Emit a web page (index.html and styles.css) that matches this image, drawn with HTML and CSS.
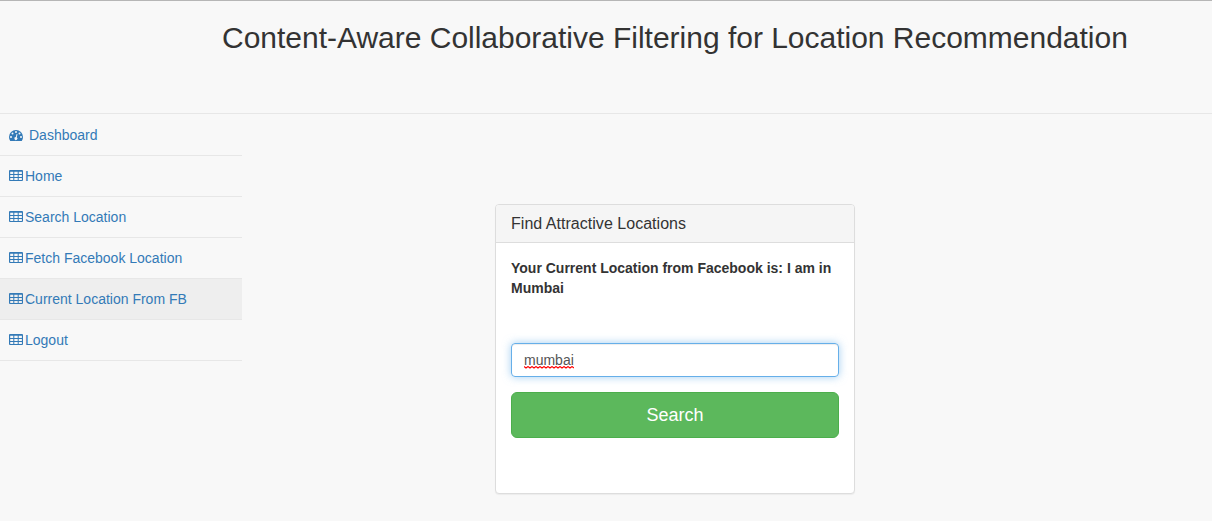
FILE: index.html
```html
<!DOCTYPE html>
<html lang="en">
<head>
<meta charset="utf-8">
<title>Content-Aware Collaborative Filtering for Location Recommendation</title>
<link rel="stylesheet" href="styles.css">
</head>
<body>
<svg class="defs" width="0" height="0">
  <symbol id="table" viewBox="0 0 14 14"><path fill-rule="evenodd" d="M1 1H13Q14 1 14 2V11Q14 12 13 12H1Q0 12 0 11V2Q0 1 1 1ZM1.200 2.800V5H4.300V2.800ZM5.300 2.800V5H8.700V2.800ZM9.700 2.800V5H12.900V2.800ZM1.200 6V8H4.300V6ZM5.300 6V8H8.700V6ZM9.700 6V8H12.900V6ZM1.200 9V11H4.300V9ZM5.300 9V11H8.700V9ZM9.700 9V11H12.900V9Z"/></symbol>
</svg>
<header class="navbar"><h1 class="title">Content-Aware Collaborative Filtering for Location Recommendation</h1></header>
<div class="wrapper">
  <nav class="sidebar">
    <a class="item" href="#"><svg class="icon dash" viewBox="0 0 14 14"><path fill-rule="evenodd" d="M7 2A7 7 0 0 1 14 9Q14 11 12.900 12.800Q12.800 13 12.500 13H1.500Q1.200 13 1.100 12.800Q0 11 0 9A7 7 0 0 1 7 2ZM2 8a1 1 0 1 0 0 2a1 1 0 1 0 0-2ZM3.500 4.500a1 1 0 1 0 0 2a1 1 0 1 0 0-2ZM7 3a1 1 0 1 0 0 2a1 1 0 1 0 0-2ZM10.500 4.500a1 1 0 1 0 0 2a1 1 0 1 0 0-2ZM12 8a1 1 0 1 0 0 2a1 1 0 1 0 0-2ZM7.600 6L6.800 9a1.500 1.500 0 1 0 1 .3L8.500 6.200Z"/></svg>Dashboard</a>
    <a class="item" href="#"><svg class="icon"><use href="#table"/></svg>Home</a>
    <a class="item" href="#"><svg class="icon"><use href="#table"/></svg>Search Location</a>
    <a class="item" href="#"><svg class="icon"><use href="#table"/></svg>Fetch Facebook Location</a>
    <a class="item active" href="#"><svg class="icon"><use href="#table"/></svg>Current Location From FB</a>
    <a class="item" href="#"><svg class="icon"><use href="#table"/></svg>Logout</a>
  </nav>
  <main class="content">
    <section class="panel">
      <h2 class="panel-heading">Find Attractive Locations</h2>
      <div class="panel-body">
        <p class="current">Your Current Location from Facebook is: I am in Mumbai</p>
        <div class="input" role="textbox"><span class="misspelled">mumbai<svg class="squiggle" width="50" height="3" viewBox="0 0 50 3"><path d="M0 .5L2 2L4 .5L6 2L8 .5L10 2L12 .5L14 2L16 .5L18 2L20 .5L22 2L24 .5L26 2L28 .5L30 2L32 .5L34 2L36 .5L38 2L40 .5L42 2L44 .5L46 2L48 .5L50 2"/></svg></span></div>
        <button class="btn">Search</button>
      </div>
    </section>
  </main>
</div>
</body>
</html>
```
FILE: styles.css
```css
* { box-sizing: border-box; }
body { margin: 0; height: 521px; overflow: hidden; background: #f8f8f8; color: #333; font: 14px/20px "Liberation Sans", Arial, sans-serif; }
.defs { display: block; }
.navbar { height: 114px; border-top: 1px solid #b6b6b6; border-bottom: 1px solid #e7e7e7; padding: 20px 0 0 222px; }
.title { margin: 0; font-size: 30px; line-height: 33px; font-weight: 400; letter-spacing: -.012px; white-space: nowrap; }
.wrapper { display: flex; }
.sidebar { width: 242px; padding-top: 1px; }
.item { display: flex; align-items: center; height: 41px; padding: 0 9px; gap: 2px; border-bottom: 1px solid #e7e7e7; color: #337ab7; text-decoration: none; white-space: nowrap; }
.item.active { background: #eee; }
.icon { width: 14px; height: 14px; fill: currentColor; }
.dash { margin-right: 4px; }
.content { flex: 1; padding: 90px 0 0 253px; }
.panel { width: 360px; height: 290px; background: #fff; border: 1px solid #ddd; border-radius: 4px; box-shadow: 0 1px 1px rgba(0,0,0,.05); }
.panel-heading { margin: 0; height: 38px; padding: 10px 15px; background: #f5f5f5; border-bottom: 1px solid #ddd; border-radius: 3px 3px 0 0; font-size: 16px; line-height: 17px; font-weight: 400; letter-spacing: .03px; }
.panel-body { padding: 15px; }
.current { margin: 0 0 45px; font-weight: 700; }
.input { height: 34px; padding: 6px 12px; border: 1px solid #66afe9; border-radius: 4px; color: #555; box-shadow: inset 0 1px 1px rgba(0,0,0,.075), 0 0 8px rgba(102,175,233,.6); }
.misspelled { position: relative; display: inline-block; }
.squiggle { position: absolute; left: 0; bottom: 1px; fill: none; stroke: #f00; stroke-width: 1.1; }
.btn { display: block; width: 100%; height: 46px; margin-top: 15px; padding: 0; border: 1px solid #4cae4c; border-radius: 6px; background: #5cb85c; color: #fff; font: 18px/24px "Liberation Sans", Arial, sans-serif; }
```
